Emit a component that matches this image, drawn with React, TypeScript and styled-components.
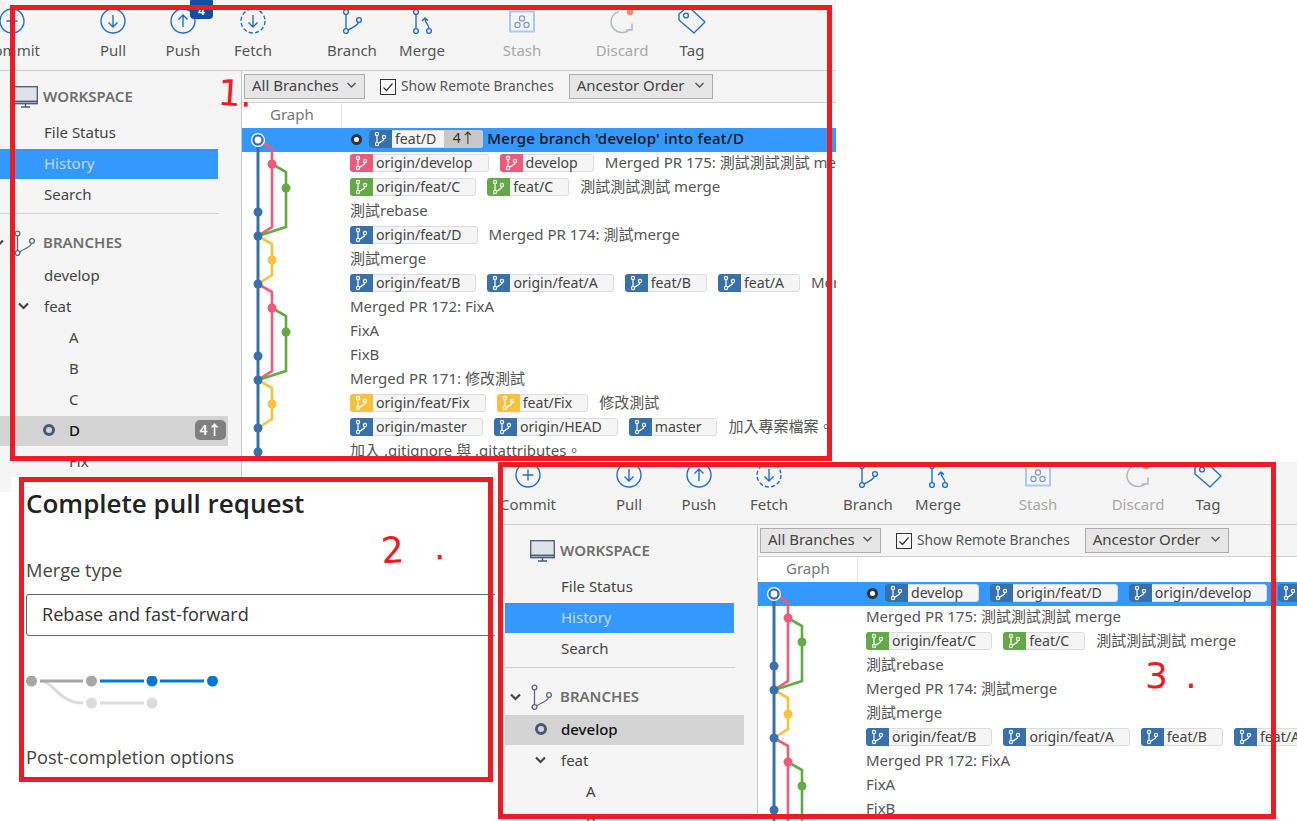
import React from 'react';
import styled, { createGlobalStyle } from 'styled-components';

const GlobalStyle = createGlobalStyle`
  html, body {
    margin: 0;
    padding: 0;
    background: #fff;
  }
  body {
    font-family: "Noto Sans", "Noto Sans CJK TC", sans-serif;
    color: #444;
  }
`
const Page = styled.div`
  position: relative;
  width: 1297px;
  height: 821px;
  overflow: hidden;
  background: #fff;
`
const Window = styled.section<{ $x: number; $y: number; $w: number; $h: number; $lift: number; $band: number; $indent: number; $shift: number }>`
  position: absolute;
  left: ${p => p.$x}px;
  top: ${p => p.$y}px;
  width: ${p => p.$w}px;
  height: ${p => p.$h}px;
  overflow: hidden;
  background: #f5f5f5;
  --lift: ${p => p.$lift}px;
  --band: ${p => p.$band}px;
  --indent: ${p => p.$indent}px;
  --shift: ${p => p.$shift}px;
`
const Toolbar = styled.header`
  display: flex;
  height: 70px;
  margin-top: var(--lift);
  border-bottom: 1px solid #d0d0d0;
`
const ToolList = styled.div`
  display: flex;
  margin-left: calc(var(--shift) - 23px);
`
const ToolItem = styled.div<{ $before?: number; $muted?: boolean }>`
  position: relative;
  flex: none;
  width: 70px;
  margin-left: ${p => p.$before ?? 0}px;
  padding-top: 8px;
  display: flex;
  flex-direction: column;
  align-items: center;
  color: ${p => (p.$muted ? '#a9a9a9' : '#555')};
  font-size: 15px;
  line-height: 20px;
  svg {
    display: block;
    width: 28px;
    height: 26px;
    margin-bottom: 6px;
  }
`
const PushBadge = styled.span`
  position: absolute;
  left: 42px;
  top: -2px;
  width: 23px;
  height: 21px;
  border-radius: 4px;
  background: #0f4fa8;
  color: #fff;
  font-size: 12px;
  font-weight: 600;
  line-height: 25px;
  text-align: center;
`
const Body = styled.div`
  display: flex;
  height: 500px;
`
const Sidebar = styled.aside`
  flex: none;
  width: calc(241px + var(--shift));
  border-right: 1px solid #c9c9c9;
  color: #444;
  font-size: 15px;
  line-height: 20px;
`
const SectionHeader = styled.div<{ $first?: boolean }>`
  display: flex;
  align-items: center;
  height: ${p => (p.$first ? 42 : 37)}px;
  padding-top: ${p => (p.$first ? 5 : 10)}px;
  margin-left: calc(var(--band) + var(--indent) + ${p => (p.$first ? 13 : -7)}px);
  color: #6f6f6f;
  font-size: 15px;
  font-weight: 600;
  svg {
    flex: none;
  }
`
const SectionTitle = styled.span<{ $at: number }>`
  margin-left: ${p => p.$at}px;
  margin-bottom: 2px;
`
const Chevron = styled.svg`
  display: block;
  flex: none;
  width: 11px;
  height: 8px;
`
const TreeRow = styled.div<{ $depth?: number; $kind?: 'history' | 'current'; }>`
  display: flex;
  align-items: center;
  box-sizing: border-box;
  height: 30px;
  margin-bottom: 1px;
  margin-left: var(--band);
  margin-right: ${p => (p.$kind === 'current' ? 13 : 23)}px;
  padding-left: calc(var(--indent) + ${p => 44 + (p.$depth ?? 0) * 25}px);
  padding-right: 2px;
  padding-bottom: 2px;
  background: ${p => (p.$kind === 'history' ? '#3399ff' : p.$kind === 'current' ? '#d4d4d4' : 'transparent')};
  color: ${p => (p.$kind === 'history' ? '#c3d8ee' : p.$kind === 'current' ? '#111' : '#444')};
  font-weight: ${p => (p.$kind === 'current' ? 500 : 400)};
`
const Lead = styled.span`
  display: flex;
  align-items: center;
  flex: none;
  width: 26px;
  margin-left: -26px;
`
const CurrentDot = styled.span`
  display: block;
  width: 6px;
  height: 6px;
  border: 3px solid #4b5877;
  border-radius: 50%;
`
const AheadBadge = styled.span`
  margin-left: auto;
  width: 31px;
  height: 20px;
  border-radius: 5px;
  background: #808080;
  color: #fff;
  font-size: 14px;
  font-weight: 600;
  line-height: 20px;
  text-align: center;
`
const SideRule = styled.div`
  height: 1px;
  margin: 3px 22px 0 var(--band);
  background: #d2d2d2;
`
const Main = styled.main`
  flex: 1;
  min-width: 0;
  background: #fff;
`
const FilterBar = styled.div`
  display: flex;
  align-items: center;
  height: 31px;
  padding-left: 2px;
  background: #f5f5f5;
  border-bottom: 1px solid #d0d0d0;
  white-space: nowrap;
`
const Select = styled.div<{ $w: number }>`
  display: flex;
  align-items: center;
  justify-content: space-between;
  box-sizing: border-box;
  flex: none;
  width: ${p => p.$w}px;
  height: 25px;
  padding: 0 7px 3px;
  background: #e6e6e6;
  border: 1px solid #adadad;
  color: #444;
  font-size: 15px;
`
const CheckLabel = styled.label`
  display: flex;
  align-items: center;
  margin: 0 15px;
  padding-bottom: 2px;
  color: #555;
  font-size: 13.8px;
`
const CheckBox = styled.span`
  box-sizing: border-box;
  display: block;
  width: 16px;
  height: 16px;
  margin: 2px 5px 0 0;
  background: #fff;
  border: 1px solid #333;
  svg {
    display: block;
  }
`
const GraphHeader = styled.div`
  height: 25px;
  box-sizing: border-box;
  width: 100px;
  padding-left: 28px;
  border-right: 1px solid #e6e6e6;
  color: #777;
  font-size: 15px;
  line-height: 22px;
`
const CommitList = styled.div`
  position: relative;
`
const GraphCanvas = styled.svg`
  position: absolute;
  left: 0;
  top: 0;
  width: 60px;
  height: 340px;
`
const CommitRow = styled.div<{ $selected?: boolean }>`
  display: flex;
  align-items: center;
  box-sizing: border-box;
  height: 24px;
  padding-left: 108px;
  padding-bottom: 2px;
  background: ${p => (p.$selected ? '#3399ff' : 'transparent')};
  color: ${p => (p.$selected ? '#111' : '#555')};
  font-size: 15px;
  font-weight: ${p => (p.$selected ? 500 : 400)};
  line-height: 20px;
  white-space: nowrap;
`
const HeadRing = styled.span`
  flex: none;
  width: 5px;
  height: 5px;
  margin: 0 7px 0 1px;
  background: #fff;
  border: 3px solid #333;
  border-radius: 50%;
`
const Tag = styled.span<{ $color: string; $tail?: boolean }>`
  display: flex;
  align-items: center;
  flex: none;
  box-sizing: border-box;
  height: 18px;
  margin-right: 11px;
  padding-right: ${p => (p.$tail ? 0 : 15)}px;
  padding-bottom: 1px;
  background: #f5f5f5;
  border: 1px solid #dcdcdc;
  border-radius: 3px;
  color: #444;
  font-size: 14.1px;
  font-weight: 400;
  line-height: 15px;
  svg {
    flex: none;
    width: 23px;
    height: 18px;
    margin: -1px 3px -2px -1px;
    padding: 0 4px;
    box-sizing: border-box;
    background: ${p => p.$color};
    border-radius: 3px 0 0 3px;
  }
`
const TagCount = styled.span`
  align-self: stretch;
  margin: -1px -1px -2px 8px;
  width: 39px;
  background: #c8c8c8;
  border-radius: 0 3px 3px 0;
  color: #333;
  line-height: 16px;
  text-align: center;
`
const Message = styled.span<{ $tight?: boolean }>`
  margin-left: ${p => (p.$tight ? -7 : 0)}px;
  margin-bottom: 2px;
  letter-spacing: ${p => (p.$tight ? 0.25 : 0)}px;
`
const PullPanel = styled.section`
  position: absolute;
  left: 11px;
  top: 477px;
  box-sizing: border-box;
  width: 484px;
  height: 307px;
  padding: 7px 0 0 15px;
  overflow: hidden;
  background: #fff;
`
const PanelTitle = styled.h1`
  margin: 0;
  color: #222;
  font-family: "Open Sans", sans-serif;
  font-size: 26px;
  font-weight: 600;
  line-height: 38px;
`
const FieldLabel = styled.div`
  margin-top: 36px;
  color: #444;
  font-family: "Open Sans", sans-serif;
  font-size: 18.3px;
  line-height: 24px;
`
const MergeSelect = styled.div`
  box-sizing: border-box;
  width: 520px;
  height: 42px;
  margin-top: 12px;
  padding-left: 15px;
  border: 1px solid #666;
  border-radius: 3px;
  color: #333;
  font-family: "Open Sans", sans-serif;
  font-size: 18.1px;
  line-height: 39px;
`
const MergeDiagram = styled.svg`
  display: block;
  width: 200px;
  height: 40px;
  margin-top: 40px;
`
const PostLabel = styled(FieldLabel)`
  margin-top: 29px;
`
const RedFrame = styled.div<{ $x: number; $y: number; $w: number; $h: number }>`
  position: absolute;
  left: ${p => p.$x}px;
  top: ${p => p.$y}px;
  width: ${p => p.$w}px;
  height: ${p => p.$h}px;
  box-sizing: border-box;
  border: 5px solid #ed1c24;
  pointer-events: none;
`
const Scribble = styled.span<{ $x: number; $y: number; $tilt: number; $spread: number }>`
  position: absolute;
  left: ${p => p.$x}px;
  top: ${p => p.$y}px;
  color: #ed1c24;
  font-family: "DejaVu Sans", sans-serif;
  font-size: 36px;
  line-height: 36px;
  letter-spacing: ${p => p.$spread}px;
  white-space: pre;
  transform: rotate(${p => p.$tilt}deg);
`

const BLUE = '#3870ac';
const PINK = '#f0597a';
const GREEN = '#63a945';
const YELLOW = '#f7c13e';
const ICON = '#1f6fd1';

type TagInfo = { label: string; color: string; ahead?: string };
type Commit = { tags?: TagInfo[]; message?: string; selected?: boolean; head?: boolean };

const tag = (label: string, color: string): TagInfo => ({ label, color });

const historyOne: Commit[] = [
  {
    selected: true,
    head: true,
    tags: [{ label: 'feat/D', color: BLUE, ahead: '4↑' }],
    message: "Merge branch 'develop' into feat/D",
  },
  { tags: [tag('origin/develop', PINK), tag('develop', PINK)], message: 'Merged PR 175: 測試測試測試 merge' },
  { tags: [tag('origin/feat/C', GREEN), tag('feat/C', GREEN)], message: '測試測試測試 merge' },
  { message: '測試rebase' },
  { tags: [tag('origin/feat/D', BLUE)], message: 'Merged PR 174: 測試merge' },
  { message: '測試merge' },
  {
    tags: [tag('origin/feat/B', BLUE), tag('origin/feat/A', BLUE), tag('feat/B', BLUE), tag('feat/A', BLUE)],
    message: 'Merged PR 173',
  },
  { message: 'Merged PR 172: FixA' },
  { message: 'FixA' },
  { message: 'FixB' },
  { message: 'Merged PR 171: 修改測試' },
  { tags: [tag('origin/feat/Fix', YELLOW), tag('feat/Fix', YELLOW)], message: '修改測試' },
  { tags: [tag('origin/master', BLUE), tag('origin/HEAD', BLUE), tag('master', BLUE)], message: '加入專案檔案。' },
  { message: '加入 .gitignore 與 .gitattributes。' },
];

const historyThree: Commit[] = [
  {
    selected: true,
    head: true,
    tags: [tag('develop', BLUE), tag('origin/feat/D', BLUE), tag('origin/develop', BLUE), tag('feat/D', BLUE)],
  },
  { message: 'Merged PR 175: 測試測試測試 merge' },
  { tags: [tag('origin/feat/C', GREEN), tag('feat/C', GREEN)], message: '測試測試測試 merge' },
  { message: '測試rebase' },
  { message: 'Merged PR 174: 測試merge' },
  { message: '測試merge' },
  { tags: [tag('origin/feat/B', BLUE), tag('origin/feat/A', BLUE), tag('feat/B', BLUE), tag('feat/A', BLUE)] },
  { message: 'Merged PR 172: FixA' },
  { message: 'FixA' },
  { message: 'FixB' },
];

const TagBranchIcon = () => (
  <svg viewBox="0 0 15 18" fill="none" stroke="#fff" strokeWidth="1.2">
    <circle cx="4" cy="4" r="1.6" />
    <circle cx="4" cy="14" r="1.6" />
    <circle cx="11" cy="7" r="1.6" />
    <path d="M4 5.6v6.8M11 8.6c0 2.4-3.6 3.4-5.6 4.6" />
  </svg>
);

const DownChevron = ({ color = '#555' }: { color?: string }) => (
  <Chevron viewBox="0 0 11 8" fill="none" stroke={color} strokeWidth="1.5">
    <path d="M1.5 2l4 4 4-4" />
  </Chevron>
);

const TreeChevron = () => (
  <Chevron viewBox="0 0 11 8" fill="none" stroke="#444" strokeWidth="2.2">
    <path d="M1 1.5l4.5 4.5 4.5-4.5" />
  </Chevron>
);

const CircleIcon = ({ dashed, children }: { dashed?: boolean; children: React.ReactNode }) => (
  <svg viewBox="0 0 28 26" fill="none" stroke={ICON} strokeWidth="1.4">
    <circle cx="14" cy="13" r="12" strokeDasharray={dashed ? '4 2.3' : undefined} />
    {children}
  </svg>
);

const BranchIcon = () => (
  <svg viewBox="0 0 28 26" fill="none" stroke={ICON} strokeWidth="1.4">
    <circle cx="8" cy="4" r="2.4" />
    <circle cx="8" cy="23" r="2.4" />
    <circle cx="21" cy="12" r="2.4" />
    <path d="M8 6.4v14.2M20.4 14.3c-1 3.6-6 5-10.2 7.8" />
  </svg>
);

const MergeIcon = () => (
  <svg viewBox="0 0 28 26" fill="none" stroke={ICON} strokeWidth="1.4">
    <circle cx="8" cy="4" r="2.4" />
    <circle cx="8" cy="23" r="2.4" />
    <circle cx="21" cy="23" r="2.4" />
    <path d="M8 6.4v14.2M21 20.6c0-4-3.6-5-4-9.6M14 13l3-3 3 2.6" />
  </svg>
);

const StashIcon = () => (
  <svg viewBox="0 0 28 26" fill="none" stroke="#a9c9f2" strokeWidth="1.5">
    <rect x="2" y="3.5" width="24" height="20" strokeWidth="2" />
    <g stroke="#7d9cc8" strokeWidth="1.2">
      <circle cx="14" cy="10.5" r="2.6" />
      <circle cx="9.5" cy="17" r="2.6" />
      <circle cx="18.5" cy="17" r="2.6" />
    </g>
  </svg>
);

const DiscardIcon = () => (
  <svg viewBox="0 0 28 26" fill="none" stroke="#b4bac4" strokeWidth="1.6">
    <path d="M11 3.5A11 11 0 0 0 3 13.5c0 6.5 5 11 11 11 3.5 0 6.5-1.5 8-3.6" />
    <path d="M24 15.5v6.5h-6.5" />
    <circle cx="22" cy="4" r="3.2" fill="#f58a6c" stroke="none" />
  </svg>
);

const TagIcon = () => (
  <svg viewBox="0 0 28 26" fill="none" stroke={ICON} strokeWidth="1.4">
    <path d="M1 6l6-5h6l14 13-11 11L1 12z" strokeLinejoin="round" />
    <circle cx="8" cy="7.5" r="2.4" />
  </svg>
);

const MonitorIcon = () => (
  <svg width="25" height="22" viewBox="0 0 25 22" fill="#dfe2e8" stroke="#4b5877" strokeWidth="1.3">
    <rect x="0.7" y="0.7" width="23.6" height="17" />
    <path d="M1 15.5h23" strokeWidth="1.8" />
    <path d="M12.5 18v2.5M8 21h9" fill="none" strokeWidth="1.4" />
  </svg>
);

const SideBranchSvg = styled.svg`
  margin-left: 10px;
`

const SideBranchIcon = () => (
  <SideBranchSvg width="21" height="26" viewBox="0 0 21 26" fill="none" stroke="#5a6884" strokeWidth="1.3">
    <circle cx="3.5" cy="3.5" r="2.4" />
    <circle cx="3.5" cy="23" r="2.4" />
    <circle cx="18" cy="11" r="2.4" />
    <path d="M3.5 6v14.5M17.5 13.4c-1 4-6 4.6-11.8 8.4" />
  </SideBranchSvg>
);

// graph coordinates are relative to the top left of the commit list
const x1 = 16;
const x2 = 30;
const x3 = 44;
const rowY = (i: number) => 12 + i * 24;

const graphLines = [
  { color: PINK, d: `M${x1} ${rowY(0)}L${x2} ${rowY(0) + 8}V${rowY(4) - 9}L${x1} ${rowY(4)}` },
  { color: GREEN, d: `M${x2} ${rowY(1)}L${x3} ${rowY(1) + 8}V${rowY(4) - 9}L${x1} ${rowY(4)}` },
  { color: YELLOW, d: `M${x1} ${rowY(4)}L${x2} ${rowY(4) + 8}V${rowY(6) - 9}L${x1} ${rowY(6)}` },
  { color: PINK, d: `M${x1} ${rowY(6)}L${x2} ${rowY(6) + 8}V${rowY(10) - 9}L${x1} ${rowY(10)}` },
  { color: GREEN, d: `M${x2} ${rowY(7)}L${x3} ${rowY(7) + 8}V${rowY(10) - 9}L${x1} ${rowY(10)}` },
  { color: YELLOW, d: `M${x1} ${rowY(10)}L${x2} ${rowY(10) + 8}V${rowY(12) - 9}L${x1} ${rowY(12)}` },
];

const graphDots = [
  { x: x2, row: 1, color: PINK },
  { x: x3, row: 2, color: GREEN },
  { x: x1, row: 3, color: BLUE },
  { x: x1, row: 4, color: BLUE },
  { x: x2, row: 5, color: YELLOW },
  { x: x1, row: 6, color: BLUE },
  { x: x2, row: 7, color: PINK },
  { x: x3, row: 8, color: GREEN },
  { x: x1, row: 9, color: BLUE },
  { x: x1, row: 10, color: BLUE },
  { x: x2, row: 11, color: YELLOW },
  { x: x1, row: 12, color: BLUE },
  { x: x1, row: 13, color: BLUE },
];

const CommitGraph = () => (
  <GraphCanvas viewBox="0 0 60 340" fill="none" strokeWidth="2.6">
    <path d={`M${x1} ${rowY(0)}V${rowY(13)}`} stroke={BLUE} strokeWidth="3" />
    {graphLines.map(l => (
      <path key={l.d} d={l.d} stroke={l.color} />
    ))}
    {graphDots.map(d => (
      <circle key={`${d.x}-${d.row}`} cx={d.x} cy={rowY(d.row)} r="4.5" fill={d.color} stroke="none" />
    ))}
    <circle cx={x1} cy={rowY(0)} r="6.4" fill={BLUE} stroke="#fff" strokeWidth="1.3" />
    <circle cx={x1} cy={rowY(0)} r="3.4" fill="#fff" stroke="none" />
  </GraphCanvas>
);

function CommitLine({ commit }: { commit: Commit }) {
  return (
    <CommitRow $selected={commit.selected}>
      {commit.head && <HeadRing />}
      {commit.tags?.map(t => (
        <Tag key={t.label} $color={t.color} $tail={!!t.ahead}>
          <TagBranchIcon />
          {t.label}
          {t.ahead && <TagCount>{t.ahead}</TagCount>}
        </Tag>
      ))}
      {commit.message && <Message $tight={commit.selected}>{commit.message}</Message>}
    </CommitRow>
  );
}

function SourceTree({ commits, current, showBadge }: { commits: Commit[]; current: 'D' | 'develop'; showBadge?: boolean }) {
  return (
    <>
      <Toolbar>
        <ToolList>
          <ToolItem>
            <CircleIcon><path d="M14 7.5v11M8.5 13h11" /></CircleIcon>
            Commit
          </ToolItem>
          <ToolItem $before={31}>
            <CircleIcon><path d="M14 7v12M9.5 14.5L14 19l4.5-4.5" /></CircleIcon>
            Pull
          </ToolItem>
          <ToolItem>
            <CircleIcon><path d="M14 19V7M9.5 11.5L14 7l4.5 4.5" /></CircleIcon>
            Push
            {showBadge && <PushBadge>4</PushBadge>}
          </ToolItem>
          <ToolItem>
            <CircleIcon dashed><path d="M14 7v12M9.5 14.5L14 19l4.5-4.5" /></CircleIcon>
            Fetch
          </ToolItem>
          <ToolItem $before={29}>
            <BranchIcon />
            Branch
          </ToolItem>
          <ToolItem>
            <MergeIcon />
            Merge
          </ToolItem>
          <ToolItem $before={30} $muted>
            <StashIcon />
            Stash
          </ToolItem>
          <ToolItem $before={30} $muted>
            <DiscardIcon />
            Discard
          </ToolItem>
          <ToolItem>
            <TagIcon />
            Tag
          </ToolItem>
        </ToolList>
      </Toolbar>
      <Body>
        <Sidebar>
          <SectionHeader $first>
            <MonitorIcon />
            <SectionTitle $at={5}>WORKSPACE</SectionTitle>
          </SectionHeader>
          <TreeRow>File Status</TreeRow>
          <TreeRow $kind="history">History</TreeRow>
          <TreeRow>Search</TreeRow>
          <SideRule />
          <SectionHeader>
            <TreeChevron />
            <SideBranchIcon />
            <SectionTitle $at={8}>BRANCHES</SectionTitle>
          </SectionHeader>
          <TreeRow $kind={current === 'develop' ? 'current' : undefined}>
            {current === 'develop' && <Lead><CurrentDot /></Lead>}
            develop
          </TreeRow>
          <TreeRow>
            <Lead><TreeChevron /></Lead>
            feat
          </TreeRow>
          <TreeRow $depth={1}>A</TreeRow>
          <TreeRow $depth={1}>B</TreeRow>
          <TreeRow $depth={1}>C</TreeRow>
          <TreeRow $depth={1} $kind={current === 'D' ? 'current' : undefined}>
            {current === 'D' && <Lead><CurrentDot /></Lead>}
            D
            {current === 'D' && <AheadBadge>4↑</AheadBadge>}
          </TreeRow>
          <TreeRow $depth={1}>Fix</TreeRow>
        </Sidebar>
        <Main>
          <FilterBar>
            <Select $w={121}>
              All Branches
              <DownChevron />
            </Select>
            <CheckLabel>
              <CheckBox>
                <svg width="14" height="14" viewBox="0 0 14 14" fill="none" stroke="#333" strokeWidth="1.2">
                  <path d="M2.5 7.5l3 3 6-7" />
                </svg>
              </CheckBox>
              Show Remote Branches
            </CheckLabel>
            <Select $w={144}>
              Ancestor Order
              <DownChevron />
            </Select>
          </FilterBar>
          <GraphHeader>Graph</GraphHeader>
          <CommitList>
            {commits.map((c, i) => (
              <CommitLine key={i} commit={c} />
            ))}
            <CommitGraph />
          </CommitList>
        </Main>
      </Body>
    </>
  );
}

function CompletePullRequest() {
  return (
    <PullPanel>
      <PanelTitle>Complete pull request</PanelTitle>
      <FieldLabel>Merge type</FieldLabel>
      <MergeSelect>Rebase and fast-forward</MergeSelect>
      <MergeDiagram viewBox="0 0 200 40" fill="none" strokeWidth="3">
        <path d="M14 5c14 0 18 22 43 22" stroke="#dcdcdc" />
        <path d="M14 5h43" stroke="#a6a6a6" />
        <path d="M74 27h44" stroke="#dcdcdc" />
        <path d="M74 5h44M134 5h44" stroke="#0078d4" />
        <circle cx="5.5" cy="5" r="5.5" fill="#a6a6a6" />
        <circle cx="65.5" cy="5" r="5.5" fill="#a6a6a6" />
        <circle cx="65.5" cy="27" r="5.5" fill="#dcdcdc" />
        <circle cx="126" cy="27" r="5.5" fill="#dcdcdc" />
        <circle cx="126" cy="5" r="5.5" fill="#0078d4" />
        <circle cx="186.5" cy="5" r="5.5" fill="#0078d4" />
      </MergeDiagram>
      <PostLabel>Post-completion options</PostLabel>
    </PullPanel>
  );
}

export default function App() {
  return (
    <>
      <GlobalStyle />
      <Page>
        <Window $x={0} $y={0} $w={836} $h={492} $lift={0} $band={0} $indent={0} $shift={0}>
          <SourceTree commits={historyOne} current="D" showBadge />
        </Window>
        <CompletePullRequest />
        <Window $x={498} $y={462} $w={799} $h={359} $lift={-8} $band={7} $indent={12} $shift={18}>
          <SourceTree commits={historyThree} current="develop" />
        </Window>
        <RedFrame $x={10} $y={5} $w={822} $h={456} />
        <RedFrame $x={19} $y={477} $w={474} $h={305} />
        <RedFrame $x={498} $y={462} $w={778} $h={357} />
        <Scribble $x={218} $y={76} $tilt={4} $spread={0}>1.</Scribble>
        <Scribble $x={381} $y={531} $tilt={-4} $spread={9}>{'2 .'}</Scribble>
        <Scribble $x={1145} $y={658} $tilt={0} $spread={3}>{'3 .'}</Scribble>
      </Page>
    </>
  );
}
